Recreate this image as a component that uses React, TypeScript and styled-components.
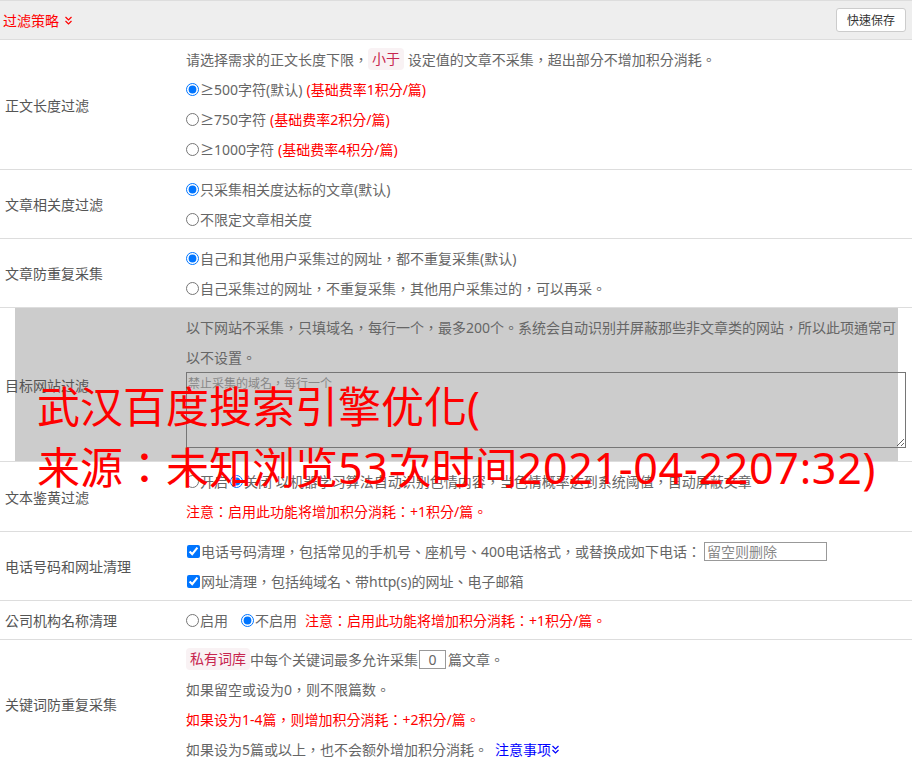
import React from "react";
import styled, { createGlobalStyle } from "styled-components";

const GlobalStyle = createGlobalStyle`
  html, body {
    margin: 0;
    padding: 0;
    background: #fff;
  }
  body {
    font-family: "Noto Sans", "Noto Sans CJK TC", sans-serif;
  }
`;

const Page = styled.div`
  position: relative;
  width: 912px;
  font-size: 14px;
  color: #666;
  font-family: "Noto Sans", "Noto Sans CJK TC", sans-serif;
`;

const Header = styled.div`
  display: flex;
  align-items: center;
  justify-content: space-between;
  height: 38px;
  padding: 0 6px 0 3px;
  background: #eee;
  border-top: 1px solid #ddd;
  border-bottom: 1px solid #ddd;
`;

const Title = styled.div`
  display: flex;
  align-items: center;
  gap: 5px;
  color: #f00;
`;

const SaveButton = styled.button`
  height: 24px;
  padding: 0 10px;
  font-family: inherit;
  font-size: 12px;
  color: #333;
  background: #fff;
  border: 1px solid #ccc;
  border-radius: 3px;
  cursor: pointer;
`;

const Row = styled.div<{ $shaded?: boolean }>`
  position: relative;
  display: grid;
  grid-template-columns: 186px 1fr;
  align-items: center;
  border-bottom: 1px solid #ddd;

  ${(p) =>
    p.$shaded &&
    `
    &::before {
      content: "";
      position: absolute;
      left: 15px;
      right: 14px;
      top: 0;
      bottom: 0;
      background: #ccc;
    }
  `}
`;

const Label = styled.div`
  position: relative;
  padding-left: 5px;
  color: #555;
  white-space: nowrap;
`;

const Content = styled.div<{ $bottom?: number }>`
  position: relative;
  padding: 4px 6px ${(p) => 4 + (p.$bottom || 0)}px 0;
`;

const Line = styled.div<{ $tone?: "red" }>`
  display: flex;
  align-items: center;
  height: 30px;
  white-space: nowrap;
  color: ${(p) => (p.$tone === "red" ? "#f00" : "#666")};
`;

const Option = styled.label<{ $gap?: number }>`
  display: inline-flex;
  align-items: center;
  margin-right: ${(p) => p.$gap || 0}px;
`;

const Radio = styled.input.attrs({ type: "radio" })`
  width: 13px;
  height: 13px;
  margin: 0 1px 0 0;
`;

const Check = styled.input.attrs({ type: "checkbox" })`
  width: 13px;
  height: 13px;
  margin: 0 1px 0 1px;
`;

const Red = styled.span<{ $gap?: number }>`
  color: #f00;
  margin-left: ${(p) => p.$gap || 0}px;
`;

const Code = styled.code`
  font-family: inherit;
  font-size: 14px;
  line-height: 18px;
  padding: 2px 4px;
  color: #c7254e;
  background: #f9f2f4;
  border-radius: 4px;
`;

const Area = styled.textarea`
  display: block;
  box-sizing: border-box;
  width: 720px;
  height: 76px;
  padding: 1px 1px;
  font-family: inherit;
  font-size: 12px;
  color: #666;
  background: transparent;
  border: 1px solid #767676;
  resize: vertical;
  &::placeholder {
    color: #888;
  }
`;

const SmallInput = styled.input<{ $w: number }>`
  box-sizing: border-box;
  width: ${(p) => p.$w}px;
  height: 19px;
  padding: 0 2px;
  font-family: inherit;
  font-size: 14px;
  color: #666;
  border: 1px solid #999;
  outline: none;
  &::placeholder {
    color: #888;
  }
`;

const CountInput = styled(SmallInput)`
  text-align: center;
  margin: 0 2px 0 1px;
`;

const Link = styled.a`
  display: inline-flex;
  align-items: center;
  margin-left: 7px;
  color: #00f;
  text-decoration: none;
`;

const Watermark = styled.div`
  position: absolute;
  top: 376px;
  left: 37px;
  z-index: 5;
  font-size: 43px;
  line-height: 61px;
  color: #f00;
  white-space: nowrap;
  pointer-events: none;
`;

const Digits = styled.span`
  letter-spacing: 0.7px;
`;

const Chevrons = ({ color }: { color: string }) => (
  <svg width="9" height="9" viewBox="0 0 9 9" fill="none" stroke={color} strokeWidth="1.2">
    <polyline points="1.5,1 4.5,4 7.5,1" />
    <polyline points="1.5,5 4.5,8 7.5,5" />
  </svg>
);

export default function App() {
  return (
    <Page>
      <GlobalStyle />
      <Header>
        <Title>
          过滤策略
          <Chevrons color="#f00" />
        </Title>
        <SaveButton type="button">快速保存</SaveButton>
      </Header>

      <Row>
        <Label>正文长度过滤</Label>
        <Content $bottom={1}>
          <Line>
            请选择需求的正文长度下限，<Code>小于</Code>&nbsp;设定值的文章不采集，超出部分不增加积分消耗。
          </Line>
          <Line>
            <Option>
              <Radio name="len" defaultChecked />≥500字符(默认)
            </Option>
            <Red $gap={4}>(基础费率1积分/篇)</Red>
          </Line>
          <Line>
            <Option>
              <Radio name="len" />≥750字符
            </Option>
            <Red $gap={4}>(基础费率2积分/篇)</Red>
          </Line>
          <Line>
            <Option>
              <Radio name="len" />≥1000字符
            </Option>
            <Red $gap={4}>(基础费率4积分/篇)</Red>
          </Line>
        </Content>
      </Row>

      <Row>
        <Label>文章相关度过滤</Label>
        <Content>
          <Line>
            <Option>
              <Radio name="rel" defaultChecked />只采集相关度达标的文章(默认)
            </Option>
          </Line>
          <Line>
            <Option>
              <Radio name="rel" />不限定文章相关度
            </Option>
          </Line>
        </Content>
      </Row>

      <Row>
        <Label>文章防重复采集</Label>
        <Content>
          <Line>
            <Option>
              <Radio name="dup" defaultChecked />自己和其他用户采集过的网址，都不重复采集(默认)
            </Option>
          </Line>
          <Line>
            <Option>
              <Radio name="dup" />自己采集过的网址，不重复采集，其他用户采集过的，可以再采。
            </Option>
          </Line>
        </Content>
      </Row>

      <Row $shaded>
        <Label>目标网站过滤</Label>
        <Content $bottom={9}>
          <Line>
            以下网站不采集，只填域名，每行一个，最多200个。系统会自动识别并屏蔽那些非文章类的网站，所以此项通常可
          </Line>
          <Line>以不设置。</Line>
          <Area placeholder="禁止采集的域名，每行一个" />
        </Content>
      </Row>

      <Row>
        <Label>文本鉴黄过滤</Label>
        <Content $bottom={1}>
          <Line>
            <Option $gap={2}>
              <Radio name="porn" />开启
            </Option>
            <Option>
              <Radio name="porn" defaultChecked />关闭
            </Option>
            &nbsp;以机器学习算法自动识别色情内容，当色情概率达到系统阈值，自动屏蔽文章。
          </Line>
          <Line $tone="red">注意：启用此功能将增加积分消耗：+1积分/篇。</Line>
        </Content>
      </Row>

      <Row>
        <Label>电话号码和网址清理</Label>
        <Content>
          <Line>
            <Option>
              <Check defaultChecked />电话号码清理，包括常见的手机号、座机号、400电话格式，或替换成如下电话：
            </Option>
            <SmallInput $w={123} placeholder="留空则删除" style={{ marginLeft: 3 }} />
          </Line>
          <Line>
            <Option>
              <Check defaultChecked />网址清理，包括纯域名、带http(s)的网址、电子邮箱
            </Option>
          </Line>
        </Content>
      </Row>

      <Row>
        <Label>公司机构名称清理</Label>
        <Content>
          <Line>
            <Option $gap={13}>
              <Radio name="org" />启用
            </Option>
            <Option $gap={8}>
              <Radio name="org" defaultChecked />不启用
            </Option>
            <Red>注意：启用此功能将增加积分消耗：+1积分/篇。</Red>
          </Line>
        </Content>
      </Row>

      <Row>
        <Label>关键词防重复采集</Label>
        <Content>
          <Line>
            <Code>私有词库</Code>中每个关键词最多允许采集
            <CountInput $w={27} defaultValue="0" />
            篇文章。
          </Line>
          <Line>如果留空或设为0，则不限篇数。</Line>
          <Line $tone="red">如果设为1-4篇，则增加积分消耗：+2积分/篇。</Line>
          <Line>
            如果设为5篇或以上，也不会额外增加积分消耗。
            <Link href="#">
              注意事项
              <Chevrons color="#00f" />
            </Link>
          </Line>
        </Content>
      </Row>

      <Watermark>
        武汉百度搜索引擎优化(
        <br />
        来源：未知浏览<Digits>53</Digits>次时间<Digits>2021-04-2207:32)</Digits>
      </Watermark>
    </Page>
  );
}
